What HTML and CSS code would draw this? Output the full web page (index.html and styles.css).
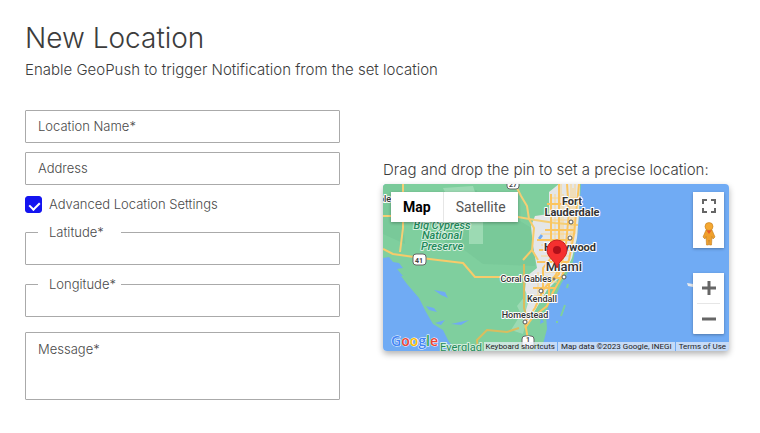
FILE: index.html
```html
<!DOCTYPE html>
<html lang="en">
<head>
    <meta charset="UTF-8">
    <meta name="viewport" content="width=device-width, initial-scale=1.0">
    <title>New Location</title>
    <link rel="stylesheet" href="styles.css">
</head>
<body>
    <main class="page">
        <header class="page-header">
            <h1>New Location</h1>
            <p class="lead">Enable GeoPush to trigger Notification from the set location</p>
        </header>

        <div class="columns">
            <form class="location-form">
                <input class="field" type="text" name="name" placeholder="Location Name*" aria-label="Location Name">
                <input class="field" type="text" name="address" placeholder="Address" aria-label="Address">
                <div class="check-row">
                    <input type="checkbox" id="advanced" checked>
                    <label for="advanced">Advanced Location Settings</label>
                </div>
                <fieldset class="outlined">
                    <legend><label for="latitude">Latitude*</label></legend>
                    <input type="text" id="latitude" name="latitude">
                </fieldset>
                <fieldset class="outlined">
                    <legend><label for="longitude">Longitude*</label></legend>
                    <input type="text" id="longitude" name="longitude">
                </fieldset>
                <textarea class="field message" name="message" placeholder="Message*" aria-label="Message"></textarea>
            </form>

            <section class="map-section">
                <p class="lead">Drag and drop the pin to set a precise location:</p>
                <div class="map">
                    <svg class="map-canvas" viewBox="0 0 346 167" preserveAspectRatio="xMidYMid slice">
                        <rect width="346" height="167" fill="#70abf4"/>
                        <!-- land -->
                        <path fill="#7fcf9e" d="M0 0H198L196 30 194 54 190 78 184 90 178 100 173 112 166 120 163 130 164 145 160 160 150 167H76L66 158 60 146 50 140 43 128 36 114 24 100 18 92 10 86 0 76Z"/>
                        <path fill="#79c999" d="M0 0H20V40L22 60 0 50ZM66 4 94 6 96 40 132 34 152 46V82L100 80 76 62 62 60 58 20Z"/>
                        <path fill="#9cdab3" d="M60 4 90 2 92 8H62ZM86 38H100V60H86ZM140 98 146 90 148 120 140 150 128 146 138 130 134 122 142 112Z"/>
                        <!-- urban area -->
                        <path fill="#e4e6e8" d="M166 8 176 0H197L196 30 194 54 189 74 182 88 172 98 164 106 150 130 144 142 140 136 146 116 142 106 144 92 154 84 150 62 148 42 152 32 166 30Z"/>
                        <!-- bays and lakes -->
                        <path fill="#70abf4" d="M0 74 6 73 10 78 16 79 20 84 14 85 20 92 0 92ZM51 106 62 108 65 114 58 111ZM43 122 51 124 54 128 46 126ZM52 139 62 136 58 141ZM68 140 86 136 78 141ZM158 134 161 138 157 140ZM155 54 158 50 160 52 157 56Z"/>
                        <!-- keys -->
                        <path fill="none" stroke="#7fcf9e" stroke-width="2" d="M185 100 184 104M182 121 178 132M174 137V139"/>
                        <path fill="#e8eaed" d="M304 99 310 100 310 103 305 102Z"/>
                        <!-- highways -->
                        <path fill="none" stroke="#fcd68a" d="M188 0V60M192 0V50M172 10V86M180 10V80M166 28H194M168 14H195M168 36H193M158 50H192M158 61H190M158 72H186M162 88H180M154 98H174M148 112H166M155 88V118M190 4V56M178 0V84"/>
                        <g fill="none" stroke="#fbc55f" stroke-width="2" stroke-linejoin="round">
                            <path stroke="#f5cf75" d="M0 32H100L135 33 152 36 172 39 195 41M20 0V44L17 68M132 0 138 12 144 22 146 35"/>
                            <path stroke="#f7cb6a" d="M0 65 10 70 38 74 80 79 92 93H168M146 35 151 44 149 66 155 76M149 66 140 76"/>
                            <path stroke="#d9bd5f" d="M141 80V124L144 134M95 167 94 156 104 146 124 148 136 144"/>
                            <path d="M142 144 150 133 164 122 170 108 178 94 186 76 191 50 194 20 196 0M142 138 145 156M184 0 186 28 183 60 178 82 172 92 160 106 152 124 142 138"/>
                            <path d="M168 10V74L160 84V110M176 0V90L166 100V118M164 20H194M162 46H192M154 56H190M156 66H188M154 78H185M152 94H178M150 104H172"/>
                        </g>
                        <!-- road shields -->
                        <g class="shield">
                            <rect x="124" y="-6" width="12" height="11" rx="3"/>
                            <text x="130" y="3">27</text>
                            <rect x="30" y="70" width="13" height="11" rx="3"/>
                            <text x="36" y="79">41</text>
                            <rect x="139" y="152" width="12" height="12" rx="3"/>
                            <text x="145" y="158">1</text>
                        </g>
                        <!-- place markers -->
                        <g fill="#fff" stroke="#555" stroke-width="1">
                            <circle cx="188" cy="38" r="2"/>
                            <circle cx="187" cy="54" r="2"/>
                            <circle cx="181" cy="93" r="2"/>
                            <circle cx="171" cy="95" r="1"/>
                            <circle cx="158" cy="107" r="2"/>
                            <circle cx="142" cy="138" r="2"/>
                        </g>
                        <g class="park">
                            <text x="59" y="45">Big Cypress</text>
                            <text x="59" y="55">National</text>
                            <text x="59" y="66">Preserve</text>
                            <text class="plain" x="78" y="167">Everglad</text>
                        </g>
                        <g class="city">
                            <text x="2" y="18">ple</text>
                            <text x="143" y="98">Coral Gables</text>
                            <text x="159" y="118">Kendall</text>
                            <text x="142" y="134">Homestead</text>
                        </g>
                        <g class="city strong">
                            <text x="189" y="21">Fort</text>
                            <text x="189" y="32">Lauderdale</text>
                            <text x="187" y="67">Hollywood</text>
                            <text class="large" x="181" y="87">Miami</text>
                        </g>
                        <!-- draggable pin -->
                        <path fill="#f5302f" stroke="#c5221f" stroke-width="1" d="M174 84C173 77 164 74 164 66A10 10 0 0 1 184 66C184 74 175 77 174 84Z"/>
                        <circle cx="174" cy="66" r="4" fill="#b0101a"/>
                    </svg>

                    <div class="map-types">
                        <button type="button" class="active">Map</button>
                        <button type="button">Satellite</button>
                    </div>

                    <div class="map-controls">
                        <div class="control-group view">
                            <button type="button" aria-label="Toggle fullscreen view">
                                <svg width="14" height="14" viewBox="0 0 14 14" fill="none" stroke="#666" stroke-width="2"><path d="M1 5V1H5M9 1H13V5M13 9V13H9M5 13H1V9"/></svg>
                            </button>
                            <button type="button" aria-label="Street View">
                                <svg width="14" height="24" viewBox="0 0 14 24"><path fill="#f0a02c" stroke="#c27d1c" stroke-width=".6" d="M4 8H10L13 15 11 17 10 14.500 9.500 23H7.500L7 18 6.500 23H4.500L4 14.500 3 17 1 15Z"/><circle cx="7" cy="4.500" r="4" fill="#f5a831" stroke="#c27d1c" stroke-width=".6"/><path fill="#e8592b" d="M4.500 8.500H9.500L7 12Z"/></svg>
                            </button>
                        </div>
                        <div class="control-group zoom">
                            <button type="button" aria-label="Zoom in">
                                <svg width="14" height="14" viewBox="0 0 14 14" stroke="#666" stroke-width="3"><path d="M0 7H14M7 0V14"/></svg>
                            </button>
                            <button type="button" aria-label="Zoom out">
                                <svg width="14" height="14" viewBox="0 0 14 14" stroke="#666" stroke-width="3"><path d="M0 7H14"/></svg>
                            </button>
                        </div>
                    </div>

                    <svg class="google" width="54" height="22" viewBox="0 0 54 22" role="img" aria-label="Google">
                        <text x="3" y="16"><tspan fill="#4285f4">G</tspan><tspan fill="#ea4335">o</tspan><tspan fill="#fbbc04">o</tspan><tspan fill="#4285f4">g</tspan><tspan fill="#34a853">l</tspan><tspan fill="#ea4335">e</tspan></text>
                    </svg>

                    <div class="attribution">
                        <button type="button">Keyboard shortcuts</button>
                        <span>Map data ©2023 Google, INEGI</span>
                        <a href="#">Terms of Use</a>
                    </div>
                </div>
            </section>
        </div>
    </main>
</body>
</html>
```

FILE: styles.css
```css
* {
    box-sizing: border-box;
}
body {
    margin: 0;
    background-color: #fff;
    color: #3c3c3c;
    font-family: Inter, "Liberation Sans", sans-serif;
    font-weight: 300;
}
input,
textarea,
button {
    font: inherit;
    color: inherit;
}
.page {
    padding: 20px 31px 20px 25px;
}
h1 {
    margin: 0;
    font-size: 28px;
    font-weight: 300;
    line-height: 36px;
}
.lead {
    margin: 0;
    font-size: 15px;
    line-height: 28px;
    white-space: nowrap;
}
.columns {
    display: grid;
    grid-template-columns: 315fr 346fr;
    gap: 43px;
    margin-top: 26px;
}
.location-form {
    display: flex;
    flex-direction: column;
    gap: 9px;
    min-width: 0;
    font-size: 13px;
}
.field {
    width: 100%;
    height: 33px;
    padding: 0 12px 2px;
    border: 1px solid #aaa;
    border-radius: 1px;
    background-color: #fff;
}
.field::placeholder {
    color: #4a4a4a;
    opacity: 1;
}
.message {
    display: block;
    height: 68px;
    margin-top: 6px;
    padding: 8px 12px;
    line-height: 16px;
    resize: none;
}
.check-row {
    display: flex;
    align-items: center;
    gap: 7px;
    height: 17px;
    margin-top: 2px;
    line-height: 17px;
    color: #4a4a4a;
}
.check-row input {
    appearance: none;
    position: relative;
    width: 17px;
    height: 17px;
    margin: 0;
    border-radius: 3px;
    background-color: #fff;
    border: 1px solid #aaa;
}
.check-row input:checked {
    background-color: #1414f0;
    border-color: #1414f0;
}
.check-row input:checked::after {
    content: "";
    position: absolute;
    left: 5px;
    top: 3px;
    width: 5px;
    height: 8px;
    border: solid #fff;
    border-width: 0 2px 2px 0;
    transform: rotate(45deg);
}
.outlined {
    margin: 0;
    padding: 0 12px;
    border: 1px solid #aaa;
    border-radius: 1px;
    min-width: 0;
}
.outlined legend {
    width: 83px;
    height: 21px;
    padding: 0 11px;
    line-height: 21px;
    color: #4a4a4a;
}
.outlined input {
    display: block;
    width: 100%;
    height: 21px;
    padding: 0;
    border: 0;
    background: none;
    outline: none;
}

/* Map */
.map-section {
    min-width: 0;
    padding-top: 46px;
}
.map {
    position: relative;
    height: 167px;
    border-radius: 4px;
    overflow: hidden;
    box-shadow: 0 3px 6px rgba(0, 0, 0, 0.3);
    font-family: Roboto, sans-serif;
}
.map-canvas {
    display: block;
    width: 100%;
    height: 100%;
}
.map-canvas text {
    text-anchor: middle;
    paint-order: stroke;
    stroke: #fff;
    stroke-width: 2px;
    stroke-linejoin: round;
}
.map-canvas .park text {
    stroke: #d5efdf;
}
.park {
    fill: #1e8a5a;
    font-size: 11px;
    font-style: italic;
    font-weight: 500;
}
.park .plain {
    font-style: normal;
    font-weight: 400;
}
.city {
    fill: #333;
    font-size: 9px;
    font-weight: 500;
}
.strong {
    font-size: 11px;
    font-weight: 700;
}
.strong .large {
    font-size: 13px;
    font-weight: 500;
}
.shield rect {
    fill: #fff;
    stroke: #666;
}
.shield text {
    fill: #444;
    font-size: 7px;
    font-weight: 700;
}
.map button {
    border: 0;
    padding: 0;
    background-color: #fff;
    cursor: pointer;
}
.map-types {
    position: absolute;
    top: 8px;
    left: 8px;
    display: flex;
    height: 30px;
    box-shadow: 0 1px 3px rgba(0, 0, 0, 0.3);
}
.map .map-types button {
    padding: 0 12px;
    font-size: 14px;
    font-weight: 400;
    color: #565656;
}
.map .map-types .active {
    border-right: 1px solid #e6e6e6;
    font-weight: 700;
    color: #000;
}
.map-controls {
    position: absolute;
    top: 8px;
    right: 5px;
    display: flex;
    flex-direction: column;
    gap: 25px;
    width: 31px;
}
.control-group {
    display: flex;
    flex-direction: column;
    background-color: #fff;
    border-radius: 1px;
    box-shadow: 0 1px 3px rgba(0, 0, 0, 0.3);
}
.control-group button {
    display: flex;
    align-items: center;
    justify-content: center;
    height: 30px;
}
.view button {
    height: 28px;
}
.map .zoom button + button {
    margin: 0 4px;
    border-top: 1px solid #e6e6e6;
    height: 31px;
}
.google {
    position: absolute;
    left: 5px;
    bottom: -1px;
}
.google text {
    font-family: "Open Sans", sans-serif;
    font-size: 14px;
    font-weight: 600;
    paint-order: stroke;
    stroke: #fff;
    stroke-width: 1px;
}
.attribution {
    position: absolute;
    right: 0;
    bottom: 0;
    display: flex;
    gap: 1px;
    font-size: 8px;
    font-weight: 400;
    line-height: 9px;
    color: #222;
    white-space: nowrap;
}
.attribution > * {
    padding: 0 3px;
    background-color: rgba(235, 240, 248, 0.7);
    color: #222;
    text-decoration: none;
}
.map .attribution button {
    padding: 0 2px 0 1px;
    background-color: rgba(235, 240, 248, 0.7);
}
```
